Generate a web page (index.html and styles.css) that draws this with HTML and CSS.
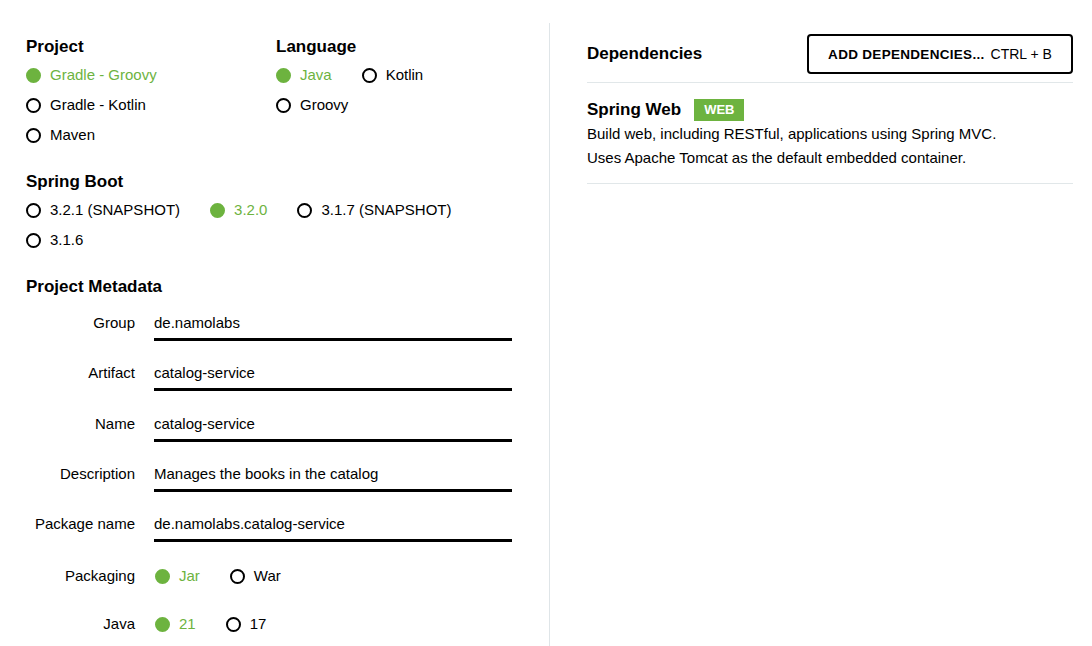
FILE: index.html
```html
<!DOCTYPE html>
<html lang="en">
<head>
<meta charset="utf-8">
<title>Spring Initializr</title>
<link rel="stylesheet" href="styles.css">
</head>
<body>
<div class="page">
  <div class="left">
    <div class="top-row">
      <div class="group col-project">
        <div class="sec-title">Project</div>
        <div class="options">
          <div class="opt checked"><span class="radio"></span>Gradle - Groovy</div>
        </div>
        <div class="options">
          <div class="opt"><span class="radio"></span>Gradle - Kotlin</div>
        </div>
        <div class="options">
          <div class="opt"><span class="radio"></span>Maven</div>
        </div>
      </div>
      <div class="group col-lang">
        <div class="sec-title">Language</div>
        <div class="options">
          <div class="opt checked"><span class="radio"></span>Java</div>
          <div class="opt"><span class="radio"></span>Kotlin</div>
          <div class="opt"><span class="radio"></span>Groovy</div>
        </div>
      </div>
    </div>

    <div class="section">
      <div class="sec-title">Spring Boot</div>
      <div class="options">
        <div class="opt"><span class="radio"></span>3.2.1 (SNAPSHOT)</div>
        <div class="opt checked"><span class="radio"></span>3.2.0</div>
        <div class="opt"><span class="radio"></span>3.1.7 (SNAPSHOT)</div>
        <div class="opt"><span class="radio"></span>3.1.6</div>
      </div>
    </div>

    <div class="section">
      <div class="sec-title">Project Metadata</div>
      <div class="fields">
        <div class="field"><div class="label">Group</div><div class="input">de.namolabs</div></div>
        <div class="field"><div class="label">Artifact</div><div class="input">catalog-service</div></div>
        <div class="field"><div class="label">Name</div><div class="input">catalog-service</div></div>
        <div class="field"><div class="label">Description</div><div class="input">Manages the books in the catalog</div></div>
        <div class="field"><div class="label">Package name</div><div class="input">de.namolabs.catalog-service</div></div>
        <div class="field radio-field"><div class="label">Packaging</div>
          <div class="options small">
            <div class="opt checked"><span class="radio"></span>Jar</div>
            <div class="opt"><span class="radio"></span>War</div>
          </div>
        </div>
        <div class="field radio-field"><div class="label">Java</div>
          <div class="options small">
            <div class="opt checked"><span class="radio"></span>21</div>
            <div class="opt"><span class="radio"></span>17</div>
          </div>
        </div>
      </div>
    </div>
  </div>

  <div class="right">
    <div class="dep-header">
      <div class="dep-title">Dependencies</div>
      <button class="add-btn"><span class="add-main">ADD DEPENDENCIES...</span><span class="add-key">CTRL + B</span></button>
    </div>
    <div class="dep-item">
      <div class="dep-name">Spring Web <span class="badge">WEB</span></div>
      <div class="dep-desc">Build web, including RESTful, applications using Spring MVC.<br>Uses Apache Tomcat as the default embedded container.</div>
    </div>
  </div>
</div>
</body>
</html>
```

FILE: styles.css
```css
* { box-sizing: border-box; }
html, body { margin: 0; padding: 0; background: #fff; }
body {
  font-family: "Liberation Sans", Arial, sans-serif;
  font-size: 15px;
  color: #000;
  width: 1092px;
  height: 646px;
  overflow: hidden;
}
.page {
  display: flex;
  padding-top: 23px;
  height: 646px;
}
.left {
  width: 550px;
  border-right: 1px solid #dfe5e8;
  padding: 14px 0 0 26px;
}
.top-row { display: flex; align-items: flex-start; }
.col-project { width: 250px; }
.col-lang { width: 236px; }
.section { margin-top: 22px; }
.sec-title {
  font-size: 17px;
  font-weight: bold;
  line-height: 20px;
  margin-bottom: 3px;
}
.options {
  display: flex;
  flex-wrap: wrap;
  width: 486px;
}
.col-lang .options { width: 236px; }
.opt {
  display: flex;
  align-items: center;
  height: 30px;
  line-height: 20px;
  margin-right: 30px;
  white-space: nowrap;
}
.radio {
  width: 15px;
  height: 15px;
  border: 2px solid #000;
  border-radius: 50%;
  margin-right: 9px;
  flex: none;
}
.opt.checked { color: #6db33f; }
.opt.checked .radio { background: #6db33f; border-color: #6db33f; }

.fields { margin-top: 10px; }
.field {
  display: flex;
  align-items: flex-start;
  margin-bottom: 16.25px;
}
.label {
  width: 109px;
  text-align: right;
  padding-top: 6px;
  line-height: 20px;
  margin-right: 19px;
  flex: none;
}
.input {
  width: 358px;
  padding: 6px 0 5px 0;
  line-height: 20px;
  border-bottom: 3px solid #000;
}
.field.radio-field {
  align-items: center;
  height: 36px;
  margin-bottom: 12px;
}
.radio-field .label { padding-top: 0; }
.options.small { width: 358px; padding-left: 1px; }
.options.small .opt { margin-right: 30px; }

.right {
  flex: 1;
  padding: 11px 19px 0 37px;
}
.dep-header {
  display: flex;
  justify-content: space-between;
  align-items: center;
  padding-bottom: 8px;
  border-bottom: 1px solid #e1e7e9;
}
.dep-title {
  font-size: 17px;
  font-weight: bold;
  line-height: 20px;
}
.add-btn {
  width: 266px;
  height: 40px;
  border: 2px solid #000;
  border-radius: 4px;
  background: #fff;
  font-family: "Liberation Sans", Arial, sans-serif;
  color: #000;
  display: flex;
  align-items: center;
  justify-content: center;
  padding: 0;
  cursor: pointer;
}
.add-main { font-weight: bold; font-size: 13.5px; letter-spacing: 0.3px; }
.add-key { font-size: 14px; margin-left: 6px; }
.dep-item {
  padding: 15px 0 13px 0;
  border-bottom: 1px solid #e1e7e9;
}
.dep-name {
  font-size: 17px;
  font-weight: bold;
  line-height: 24px;
  display: flex;
  align-items: center;
}
.badge {
  background: #6db33f;
  color: #fff;
  font-size: 13px;
  font-weight: bold;
  line-height: 22px;
  height: 22px;
  padding: 0 10px;
  margin-left: 13px;
}
.dep-desc {
  font-size: 15px;
  line-height: 24px;
}
```
